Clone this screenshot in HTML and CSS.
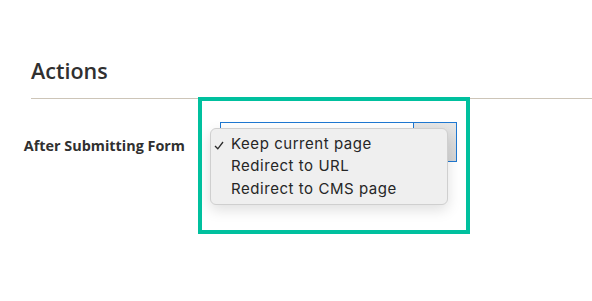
FILE: index.html
```html
<!DOCTYPE html>
<html>
<head>
<meta charset="utf-8">
<link rel="stylesheet" href="styles.css">
</head>
<body>
<div class="section">
  <h2 class="section-title">Actions</h2>
</div>
<div class="field-row">
  <label class="field-label">After Submitting Form</label>
  <div class="select-wrap">
    <div class="select">
      <div class="select-value"></div>
      <div class="select-btn"></div>
    </div>
    <ul class="menu">
      <li class="menu-item selected"><svg class="check" width="10" height="9" viewBox="0 0 10 9"><path d="M1 5 L3.8 7.8 L9 1" fill="none" stroke="#2a2a2a" stroke-width="1.3"/></svg>Keep current page</li>
      <li class="menu-item">Redirect to URL</li>
      <li class="menu-item">Redirect to CMS page</li>
    </ul>
  </div>
</div>
<div class="highlight"></div>
</body>
</html>
```
FILE: styles.css
```css
html, body {
  margin: 0;
  padding: 0;
  background: #fff;
}
body {
  width: 592px;
  height: 301px;
  position: relative;
  overflow: hidden;
  font-family: "Open Sans", sans-serif;
}
.section {
  margin-left: 31px;
}
.section-title {
  margin: 0;
  padding: 56px 0 12px;
  font-size: 21.5px;
  line-height: 30px;
  font-weight: 600;
  color: #303030;
  border-bottom: 1px solid #cdc5b8;
}
.field-row {
  display: flex;
  margin-top: 23px;
}
.field-label {
  width: 185px;
  text-align: right;
  font-size: 14.4px;
  font-weight: 700;
  color: #303030;
  line-height: 40px;
  padding-top: 4px;
  box-sizing: border-box;
}
.select-wrap {
  position: relative;
  margin-left: 35px;
}
.select {
  display: flex;
  width: 237px;
  height: 40px;
  box-sizing: border-box;
  border: 1px solid #1f78d1;
  background: #fff;
}
.select-value {
  flex: 1;
}
.select-btn {
  width: 42px;
  border-left: 1px solid #1f78d1;
  background: linear-gradient(#e6e6e6, #d4d4d4);
}
.menu {
  position: absolute;
  left: -10px;
  top: 6px;
  width: 238px;
  height: 77px;
  box-sizing: border-box;
  margin: 0;
  padding: 4px 0 0;
  list-style: none;
  background: #efefef;
  border: 1px solid #cfcfcf;
  border-radius: 6px;
  box-shadow: 0 5px 14px rgba(0, 0, 0, 0.13);
  font-family: Inter, "Liberation Sans", sans-serif;
  font-size: 15px;
  letter-spacing: 0.55px;
  color: #262626;
}
.menu-item {
  position: relative;
  line-height: 22.3px;
  padding-left: 20px;
  white-space: nowrap;
}
.check {
  position: absolute;
  left: 3px;
  top: 8px;
}
.highlight {
  position: absolute;
  left: 198px;
  top: 97px;
  width: 272px;
  height: 137px;
  box-sizing: border-box;
  border: 4px solid #00c09e;
}
```
